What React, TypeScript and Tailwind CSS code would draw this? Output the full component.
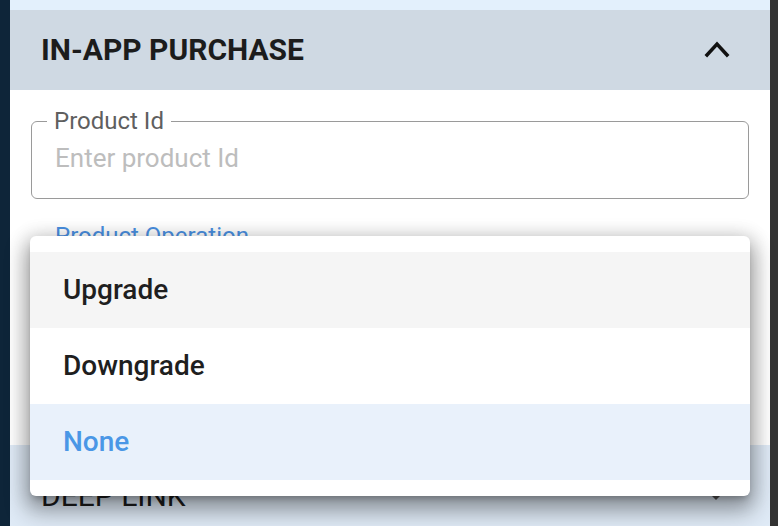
import React from "react";

const options = ["Upgrade", "Downgrade", "None"];

function ChevronUp() {
  return (
    <svg width="26" height="26" viewBox="0 0 26 26" fill="none">
      <polyline
        points="3,18 13,7 23,18"
        stroke="#111111"
        strokeWidth="3.5"
        strokeLinecap="square"
        strokeLinejoin="miter"
      />
    </svg>
  );
}

function CaretDown() {
  return (
    <svg width="24" height="24" viewBox="0 0 24 24">
      <path d="M7 10l5 5 5-5z" fill="#555555" />
    </svg>
  );
}

export default function App() {
  const selected = "None";
  return (
    <div
      className="relative w-[778px] h-[526px] overflow-hidden flex"
      style={{ fontFamily: "Roboto, 'Noto Sans', sans-serif" }}
    >
      <div className="w-[10px] h-full bg-[#0e2539]" />
      <div className="flex-1 flex flex-col bg-[#dfeaf6]">
        <div className="h-[10px] bg-[#e3f0fc]" />
        <div className="h-[80px] bg-[#cfd9e3] flex items-center justify-between pl-[31px] pr-[40px]">
          <h2 className="text-[30px] font-bold text-[#1c1c1c] leading-none">
            IN-APP PURCHASE
          </h2>
          <ChevronUp />
        </div>
        <div className="h-[355px] bg-white px-[21px] pt-[19px]">
          <fieldset className="h-[90px] border-[1.5px] border-[#9a9a9a] rounded-[6px] pl-[15px] pr-[20px] pb-0">
            <legend className="px-[7px] text-[24px] leading-none text-[#5f5f5f]">
              Product Id
            </legend>
            <div className="mt-[12px] ml-[8px] text-[26px] leading-none text-[#bdbdbd]">
              Enter product Id
            </div>
          </fieldset>
          <div className="mt-[25px] pl-[24px] text-[24px] leading-none text-[#4a90e2]">
            Product Operation
          </div>
        </div>
        <div className="flex-1 flex items-start justify-between pl-[31px] pr-[42px] pt-[36px]">
          <span className="text-[30px] font-normal text-[#1c1c1c] leading-none">DEEP LINK</span>
          <div className="mt-[4px]">
            <CaretDown />
          </div>
        </div>
      </div>
      <div className="w-[8px] h-full bg-[#333333]" />

      <ul className="absolute left-[30px] top-[236px] w-[720px] py-[16px] bg-white rounded-[6px] shadow-[0_12px_22px_4px_rgba(0,0,0,0.32),0_2px_18px_4px_rgba(0,0,0,0.12),0_5px_6px_-3px_rgba(0,0,0,0.25)]">
        {options.map((opt) => (
          <li
            key={opt}
            className={`${
              opt === selected
                ? "bg-[#e9f1fb] text-[#4a97e6]"
                : opt === "Upgrade"
                ? "bg-[#f5f5f5] text-[#1f1f1f]"
                : "bg-white text-[#1f1f1f]"
            } h-[76px] flex items-center px-[33px] text-[28px] font-medium`}
          >
            {opt}
          </li>
        ))}
      </ul>
    </div>
  );
}
